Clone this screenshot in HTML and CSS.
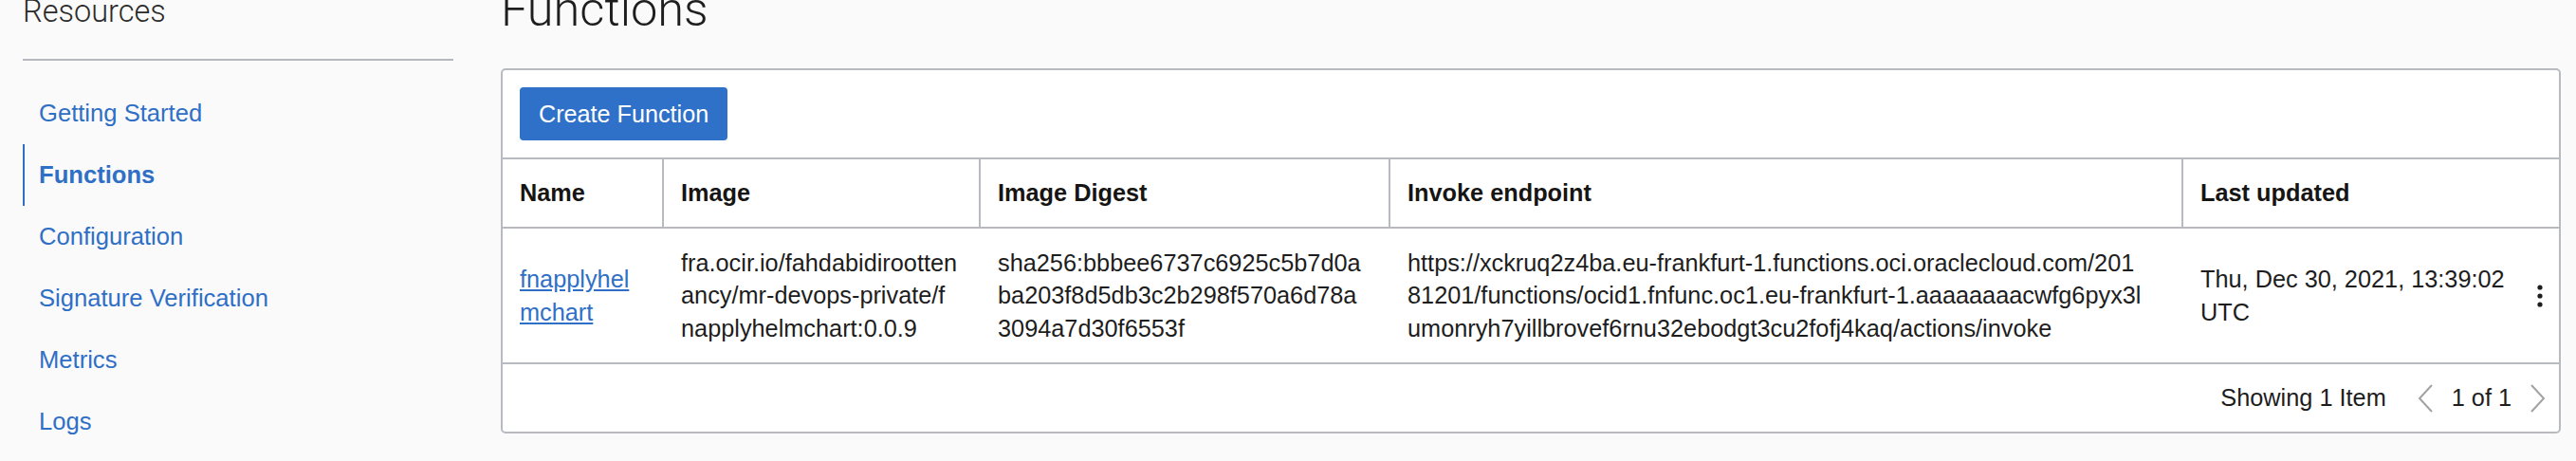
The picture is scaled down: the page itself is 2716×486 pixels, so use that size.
FILE: index.html
```html
<!DOCTYPE html>
<html lang="en">
<head>
<meta charset="utf-8">
<title>Functions</title>
<link rel="stylesheet" href="styles.css">
</head>
<body>
<div class="layout">
  <aside class="sidebar">
    <h2 class="side-title">Resources</h2>
    <nav class="side-nav">
      <a class="side-link" href="#">Getting Started</a>
      <a class="side-link active" href="#">Functions</a>
      <a class="side-link" href="#">Configuration</a>
      <a class="side-link" href="#">Signature Verification</a>
      <a class="side-link" href="#">Metrics</a>
      <a class="side-link" href="#">Logs</a>
    </nav>
  </aside>
  <main class="main">
    <h1 class="page-title">Functions</h1>
    <section class="panel">
      <div class="toolbar">
        <button class="btn-primary" type="button">Create Function</button>
      </div>
      <table class="grid">
        <colgroup>
          <col class="c-name">
          <col class="c-image">
          <col class="c-digest">
          <col class="c-endpoint">
          <col class="c-updated">
          <col class="c-actions">
        </colgroup>
        <thead>
          <tr>
            <th>Name</th>
            <th>Image</th>
            <th>Image Digest</th>
            <th>Invoke endpoint</th>
            <th colspan="2">Last updated</th>
          </tr>
        </thead>
        <tbody>
          <tr>
            <td class="name"><a class="name-link" href="#">fnapplyhelmchart</a></td>
            <td class="mono-wrap">fra.ocir.io/fahdabidirootten<br>ancy/mr-devops-private/f<br>napplyhelmchart:0.0.9</td>
            <td class="mono-wrap">sha256:bbbee6737c6925c5b7d0a<br>ba203f8d5db3c2b298f570a6d78a<br>3094a7d30f6553f</td>
            <td class="mono-wrap">https://xckruq2z4ba.eu-frankfurt-1.functions.oci.oraclecloud.com/201<br>81201/functions/ocid1.fnfunc.oc1.eu-frankfurt-1.aaaaaaaacwfg6pyx3l<br>umonryh7yillbrovef6rnu32ebodgt3cu2fofj4kaq/actions/invoke</td>
            <td class="updated">Thu, Dec 30, 2021, 13:39:02 UTC</td>
            <td class="actions">
              <svg class="kebab" width="8" height="24" viewBox="0 0 8 24" aria-label="Actions">
                <circle cx="4" cy="3" r="2.6"/>
                <circle cx="4" cy="12" r="2.6"/>
                <circle cx="4" cy="21" r="2.6"/>
              </svg>
            </td>
          </tr>
        </tbody>
      </table>
      <div class="pager">
        <span class="pager-info">Showing 1 Item</span>
        <svg class="chev" width="16" height="30" viewBox="0 0 16 30"><polyline points="15,1 2,15 15,29"/></svg>
        <span class="pager-page">1 of 1</span>
        <svg class="chev" width="16" height="30" viewBox="0 0 16 30"><polyline points="1,1 14,15 1,29"/></svg>
      </div>
    </section>
  </main>
</div>
</body>
</html>
```
FILE: styles.css
```css
html, body {
  margin: 0;
  padding: 0;
}
body {
  background: #fafafa;
  font-family: "Liberation Sans", Arial, sans-serif;
  color: #1d1d1d;
  overflow: hidden;
  height: 486px;
}
.layout {
  display: flex;
  padding-left: 24px;
}
.sidebar {
  width: 454px;
  flex: 0 0 454px;
}
.side-title {
  margin: -4px 0 0 0;
  font-family: Roboto, "Liberation Sans", sans-serif;
  font-weight: 300;
  font-size: 32.5px;
  line-height: 32px;
  color: #2b2b2b;
  padding-bottom: 34px;
  border-bottom: 2px solid #b5b9be;
}
.side-nav {
  display: flex;
  flex-direction: column;
  margin-top: 23px;
}
.side-link {
  display: block;
  height: 65px;
  line-height: 65px;
  padding-left: 15px;
  border-left: 2px solid transparent;
  color: #2f6fc6;
  text-decoration: none;
  font-size: 25.6px;
}
.side-link.active {
  border-left-color: #2f6fc6;
  font-weight: bold;
}
.main {
  flex: 1;
  margin-left: 50px;
  padding-right: 16px;
}
.page-title {
  margin: -15px 0 0 0;
  font-family: Roboto, "Liberation Sans", sans-serif;
  font-weight: 300;
  font-size: 50.5px;
  line-height: 50px;
  color: #1e1e1e;
}
.panel {
  margin-top: 37px;
  background: #fff;
  border: 2px solid #b7bbc0;
  border-radius: 5px;
}
.toolbar {
  padding: 18px;
  border-bottom: 2px solid #b7bbc0;
}
.btn-primary {
  display: block;
  height: 56px;
  padding: 0 20px;
  border: 0;
  border-radius: 4px;
  background: #2f71c8;
  color: #fff;
  font-family: "Liberation Sans", Arial, sans-serif;
  font-size: 25.2px;
}
.grid {
  width: 100%;
  table-layout: fixed;
  border-collapse: separate;
  border-spacing: 0;
  font-size: 25.3px;
}
.c-name { width: 168px; }
.c-image { width: 334px; }
.c-digest { width: 432px; }
.c-endpoint { width: 836px; }
.c-updated { width: 360px; }
.c-actions { width: 38px; }
.grid th {
  height: 71px;
  padding: 0 18px;
  text-align: left;
  font-weight: bold;
  color: #161513;
  border-bottom: 2px solid #b7bbc0;
  vertical-align: middle;
}
.grid th + th {
  border-left: 2px solid #b7bbc0;
}
.grid td {
  height: 143px;
  box-sizing: border-box;
  padding: 0 18px;
  line-height: 34.5px;
  vertical-align: middle;
  border-bottom: 2px solid #b7bbc0;
  color: #1d1d1d;
}
.grid td + td {
  padding-left: 20px;
}
.grid td.name {
  word-break: break-all;
}
.grid td.mono-wrap {
  white-space: nowrap;
}
.grid td.actions {
  padding: 0;
  text-align: left;
}
.name-link {
  color: #2f6fc6;
  text-decoration: underline;
}
.kebab {
  display: block;
  margin-left: 14px;
  fill: #1d1d1d;
}
.pager {
  height: 71px;
  display: flex;
  align-items: center;
  justify-content: flex-end;
  padding-right: 14px;
  font-size: 25.3px;
  color: #1d1d1d;
}
.pager-info {
  margin-right: 33px;
}
.pager-page {
  margin: 0 20px;
}
.chev {
  display: block;
  fill: none;
  stroke: #a2a2a2;
  stroke-width: 2;
}
```
